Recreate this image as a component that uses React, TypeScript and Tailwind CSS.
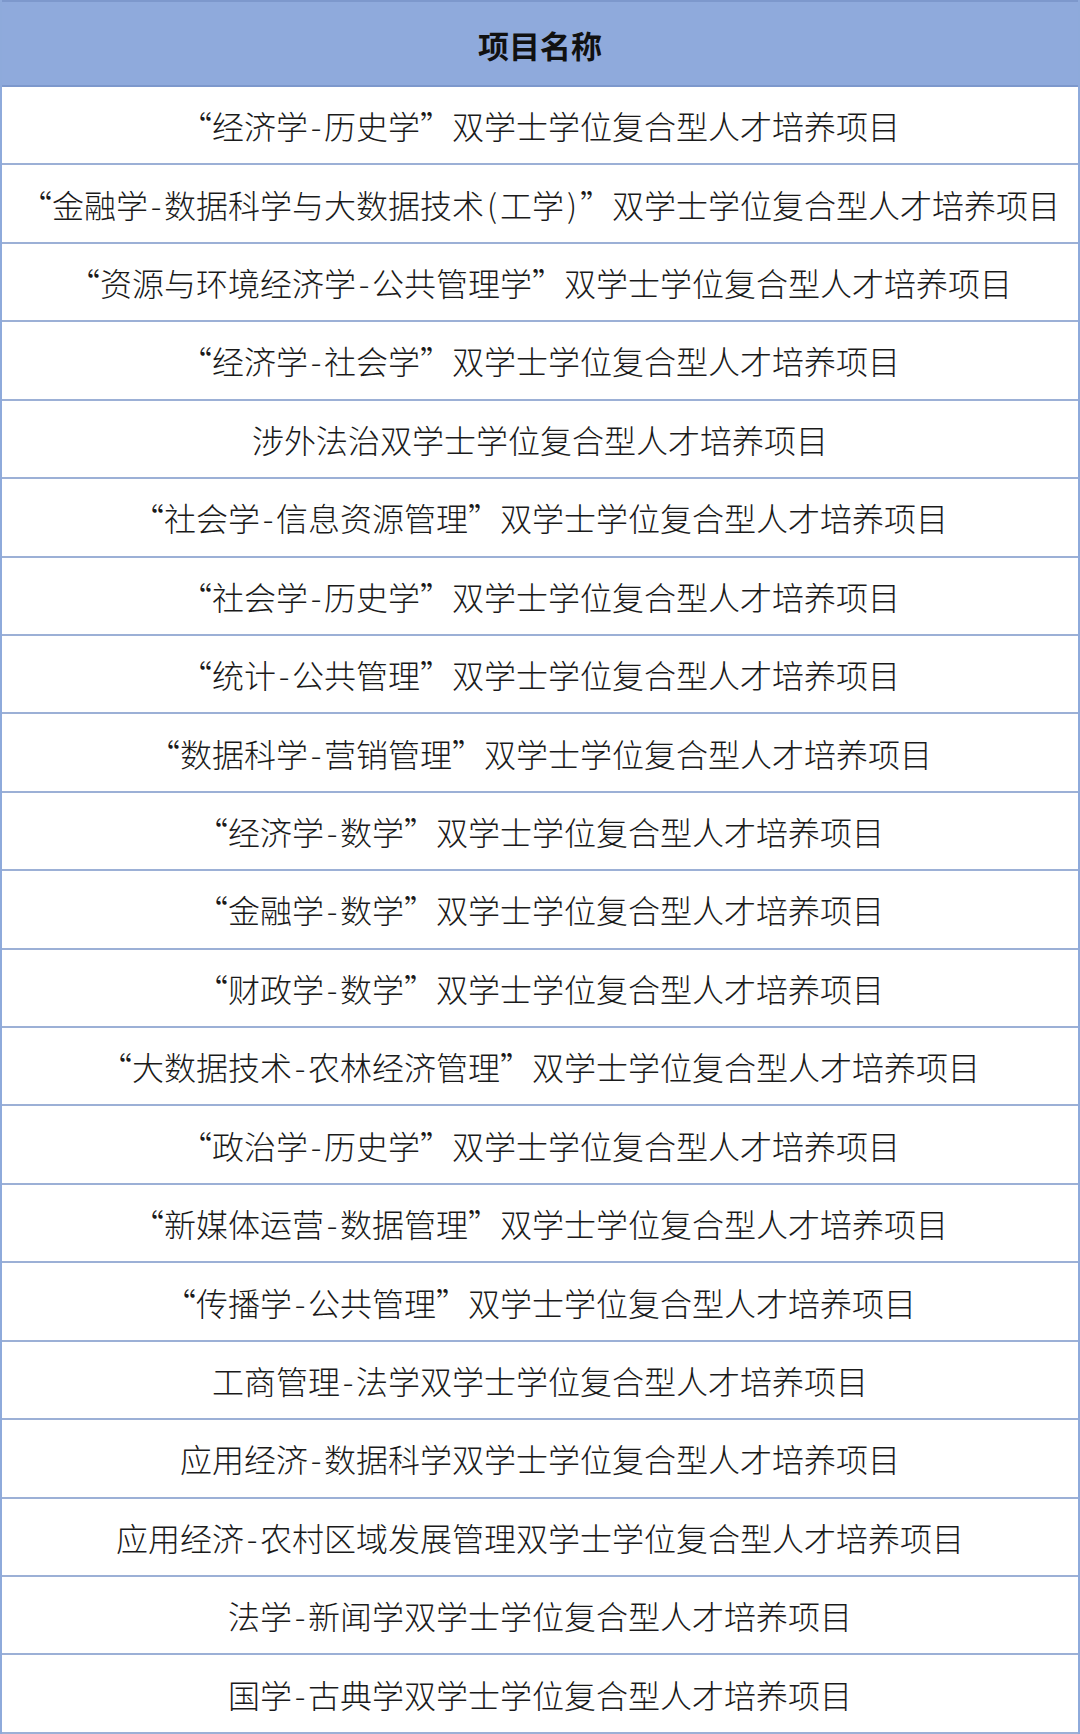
import React from "react";

const rows = [
  "“经济学-历史学”双学士学位复合型人才培养项目",
  "“金融学-数据科学与大数据技术(工学)”双学士学位复合型人才培养项目",
  "“资源与环境经济学-公共管理学”双学士学位复合型人才培养项目",
  "“经济学-社会学”双学士学位复合型人才培养项目",
  "涉外法治双学士学位复合型人才培养项目",
  "“社会学-信息资源管理”双学士学位复合型人才培养项目",
  "“社会学-历史学”双学士学位复合型人才培养项目",
  "“统计-公共管理”双学士学位复合型人才培养项目",
  "“数据科学-营销管理”双学士学位复合型人才培养项目",
  "“经济学-数学”双学士学位复合型人才培养项目",
  "“金融学-数学”双学士学位复合型人才培养项目",
  "“财政学-数学”双学士学位复合型人才培养项目",
  "“大数据技术-农林经济管理”双学士学位复合型人才培养项目",
  "“政治学-历史学”双学士学位复合型人才培养项目",
  "“新媒体运营-数据管理”双学士学位复合型人才培养项目",
  "“传播学-公共管理”双学士学位复合型人才培养项目",
  "工商管理-法学双学士学位复合型人才培养项目",
  "应用经济-数据科学双学士学位复合型人才培养项目",
  "应用经济-农村区域发展管理双学士学位复合型人才培养项目",
  "法学-新闻学双学士学位复合型人才培养项目",
  "国学-古典学双学士学位复合型人才培养项目",
];

function Line({ text }: { text: string }) {
  const parts: React.ReactNode[] = [];
  let buf = "";
  const flush = (k: string) => {
    if (buf) {
      parts.push(<span key={k}>{buf}</span>);
      buf = "";
    }
  };
  Array.from(text).forEach((ch, i) => {
    if (ch === "“") {
      flush("b" + i);
      parts.push(
        <span key={i} className="inline-block w-[1em] text-right">
          {ch}
        </span>
      );
    } else if (ch === "”") {
      flush("b" + i);
      parts.push(
        <span key={i} className="inline-block w-[1em] text-left">
          {ch}
        </span>
      );
    } else if (ch === "-" || ch === "(" || ch === ")") {
      flush("b" + i);
      parts.push(
        <span key={i} className="inline-block w-[0.5em] text-center">
          {ch}
        </span>
      );
    } else {
      buf += ch;
    }
  });
  flush("end");
  return (
    <span className="text-[32px] font-light text-[#1a1a1a] whitespace-nowrap">
      {parts}
    </span>
  );
}

export default function App() {
  return (
    <div
      className="w-[1080px] h-[1734px] flex flex-col bg-white border-x-2 border-[#8eaadb]"
      style={{ fontFamily: '"Noto Sans CJK SC", "Noto Sans", sans-serif' }}
    >
      <div className="h-[87px] shrink-0 flex items-center justify-center bg-[#8faadc] border-t-2 border-b-2 border-[#7d98cc]">
        <span className="text-[31px] font-bold text-[#111] pt-[4px]">项目名称</span>
      </div>
      {rows.map((r, i) => (
        <div
          key={i}
          className="flex-1 flex items-center justify-center border-b-2 border-[#9cb0d6]"
        >
          <Line text={r} />
        </div>
      ))}
    </div>
  );
}
